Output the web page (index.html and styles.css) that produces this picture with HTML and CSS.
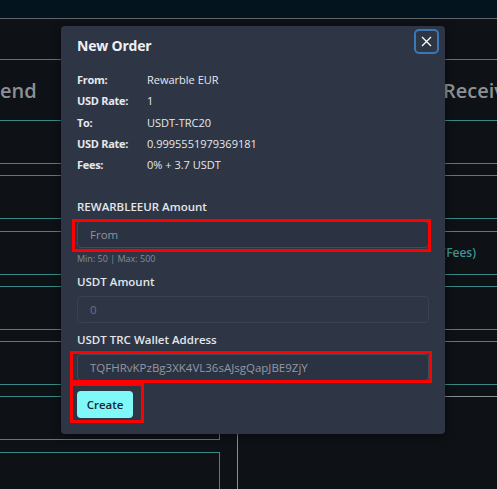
FILE: index.html
```html
<!DOCTYPE html>
<html lang="en">
<head>
<meta charset="utf-8">
<title>New Order</title>
<link rel="stylesheet" href="styles.css">
</head>
<body>
<div class="topbar"></div>
<div class="subbar"></div>
<div class="columns">
  <div class="col col-left">
    <div class="col-head">Send</div>
    <div class="box"></div>
    <div class="box"></div>
    <div class="box"></div>
    <div class="box"></div>
    <div class="box"></div>
    <div class="box"></div>
    <div class="box"></div>
  </div>
  <div class="col col-right">
    <div class="col-head">Receive</div>
    <div class="box"></div>
    <div class="box"></div>
    <div class="box box-text"><span class="fees">Amount (Fees)</span></div>
    <div class="box"></div>
    <div class="box"></div>
    <div class="gray-box"></div>
  </div>
</div>

<div class="modal">
  <div class="modal-title">New Order</div>
  <button class="close" aria-label="Close">
    <svg width="11" height="11" viewBox="0 0 11 11"><path d="M1 1 L10 10 M10 1 L1 10" stroke="#ffffff" stroke-width="1.3" fill="none"/></svg>
  </button>
  <div class="info">
    <div class="info-row"><span class="k">From:</span><span class="v">Rewarble EUR</span></div>
    <div class="info-row"><span class="k">USD Rate:</span><span class="v">1</span></div>
    <div class="info-row"><span class="k">To:</span><span class="v">USDT-TRC20</span></div>
    <div class="info-row"><span class="k">USD Rate:</span><span class="v">0.9995551979369181</span></div>
    <div class="info-row"><span class="k">Fees:</span><span class="v">0% + 3.7 USDT</span></div>
  </div>
  <div class="field">
    <div class="label">REWARBLEEUR Amount</div>
    <div class="input placeholder">From</div>
    <div class="hint">Min: 50 | Max: 500</div>
  </div>
  <div class="field">
    <div class="label">USDT Amount</div>
    <div class="input disabled">0</div>
  </div>
  <div class="field">
    <div class="label">USDT TRC Wallet Address</div>
    <div class="input value">TQFHRvKPzBg3XK4VL36sAJsgQapJBE9ZjY</div>
  </div>
  <button class="create">Create</button>
  <div class="mark mark-1"></div>
  <div class="mark mark-2"></div>
  <div class="mark mark-3"></div>
</div>
</body>
</html>
```

FILE: styles.css
```css
html, body {
  margin: 0;
  padding: 0;
}
body {
  width: 497px;
  height: 489px;
  overflow: hidden;
  background: #0e1116;
  font-family: "Open Sans", "Liberation Sans", sans-serif;
  position: relative;
}
.topbar {
  height: 18px;
  background: #04141f;
  border-bottom: 1px solid #5f6569;
}
.subbar {
  height: 40px;
  border-bottom: 1px solid #6a6f75;
}
.columns {
  display: flex;
}
.col-left {
  margin-left: -20px;
  width: 240px;
  flex: none;
}
.col-right {
  margin-left: 17px;
  width: 290px;
  flex: none;
}
.col-head {
  height: 60px;
  line-height: 62px;
  font-size: 20px;
  font-weight: 600;
  color: #8c9095;
  white-space: nowrap;
}
.col-left .col-head {
  padding-left: 9px;
}
.col-right .col-head {
  padding-left: 206px;
}
.box {
  box-sizing: border-box;
  height: 44px;
  border: 1px solid #3c8a87;
  margin-bottom: 11.3px;
}
.box-text {
  display: flex;
  align-items: center;
  justify-content: flex-end;
  padding-right: 50px;
}
.fees {
  color: #3d9692;
  font-size: 12px;
  font-weight: 600;
}
.gray-box {
  box-sizing: border-box;
  height: 120px;
  margin-top: 11px;
  border-top: 1px solid #8a8e93;
  border-left: 1px solid #8a8e93;
}

.modal {
  position: absolute;
  left: 61px;
  top: 26px;
  width: 384px;
  height: 408px;
  box-sizing: border-box;
  padding: 12px 16px 14px;
  background: #2e3646;
  border-radius: 4px;
  box-shadow: 0 2px 8px rgba(0, 0, 0, 0.5);
}
.modal-title {
  font-size: 14px;
  font-weight: 700;
  line-height: 16px;
  color: #eef0f3;
  letter-spacing: -0.2px;
}
.close {
  position: absolute;
  top: 3px;
  right: 6px;
  width: 25px;
  height: 25px;
  box-sizing: border-box;
  padding: 0;
  border: 2px solid #3a78b8;
  border-radius: 5px;
  background: transparent;
  display: flex;
  align-items: center;
  justify-content: center;
}
.info {
  margin-top: 15px;
}
.info-row {
  display: flex;
  height: 21.25px;
  line-height: 21.25px;
  font-size: 11px;
  color: #e6e8eb;
}
.k {
  width: 70px;
  font-weight: 700;
  letter-spacing: -0.3px;
}
.v {
  font-weight: 400;
}
.label {
  font-size: 11.5px;
  font-weight: 600;
  line-height: 16px;
  color: #e3e6ea;
  margin-top: 24px;
}
.field + .field .label {
  margin-top: 9px;
}
.input {
  box-sizing: border-box;
  height: 27px;
  margin-top: 6px;
  padding-left: 12px;
  line-height: 25px;
  font-size: 11.5px;
  border-radius: 4px;
  border: 1px solid #414a5a;
  background: #2b3343;
}
.placeholder {
  color: #8d939c;
}
.disabled {
  color: #6c737e;
  border-color: #3a4252;
  background: #2e3646;
}
.value {
  color: #9298a1;
}
.hint {
  margin-top: 5px;
  font-size: 9px;
  line-height: 12px;
  color: #858b94;
}
.create {
  display: block;
  margin-top: 10px;
  width: 56px;
  height: 27px;
  padding: 0;
  border: none;
  border-radius: 4px;
  background: #7ff9f7;
  color: #1c2331;
  font-family: inherit;
  font-size: 11.5px;
  font-weight: 600;
}
.mark {
  position: absolute;
  box-sizing: border-box;
  border: 3px solid #ff0000;
}
.mark-1 {
  left: 11px;
  top: 193px;
  width: 359px;
  height: 33px;
}
.mark-2 {
  left: 9px;
  top: 325px;
  width: 362px;
  height: 32px;
}
.mark-3 {
  left: 9px;
  top: 357px;
  width: 74px;
  height: 40px;
}
```
